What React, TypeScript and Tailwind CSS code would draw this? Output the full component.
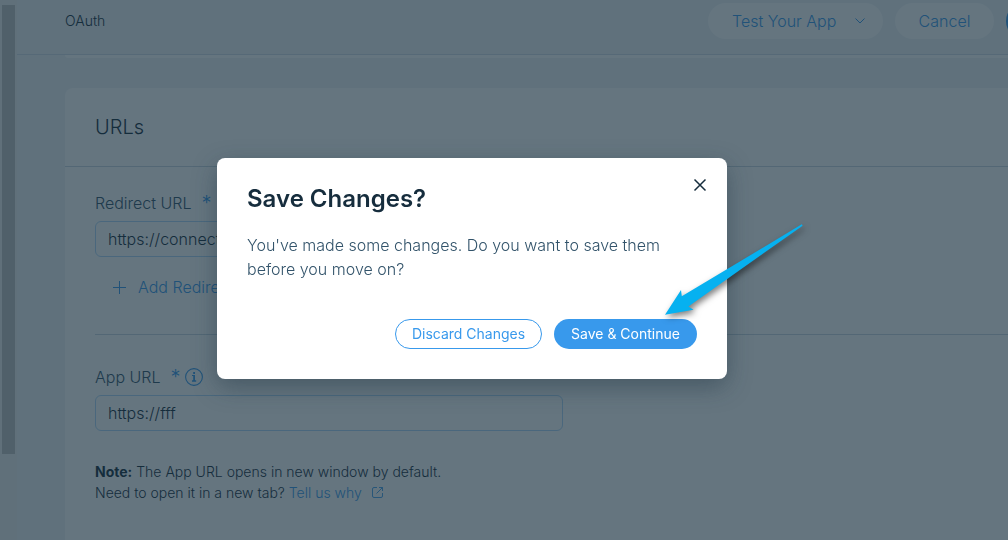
import React from "react";

const field =
  "block h-9 w-full max-w-[468px] rounded-md border border-[#b1d7f8] bg-white px-3 text-base font-light text-[#162d3d] outline-none";

function Required() {
  return (
    <span aria-hidden="true" className="ml-2.5 text-xl leading-6 font-light text-[#3899ec]">
      *
    </span>
  );
}

function Header() {
  return (
    <header className="flex h-[55px] items-start justify-between border-b border-[#d3dde6] bg-[#eff3f7] pl-12">
      <span className="pt-[11px] text-sm leading-5 font-light text-[#162d3d]">OAuth</span>
      <div className="flex w-[300px] shrink-0 gap-3 overflow-hidden pt-[3px]">
        <button
          type="button"
          className="flex h-9 w-[175px] shrink-0 items-center justify-between rounded-full bg-white pr-[18px] pl-6 text-base font-light text-[#3899ec]"
        >
          Test Your App
          <svg width="10" height="6" viewBox="0 0 10 6" fill="none" stroke="currentColor" aria-hidden="true">
            <path d="M0.5 0.5 5 5 9.5 0.5" />
          </svg>
        </button>
        <button
          type="button"
          className="h-9 w-[99px] shrink-0 rounded-full bg-white text-base font-light text-[#3899ec]"
        >
          Cancel
        </button>
        <button
          type="button"
          aria-label="Save"
          className="h-9 w-[99px] shrink-0 rounded-full bg-[#3899ec]"
        />
      </div>
    </header>
  );
}

function UrlsCard() {
  return (
    <section className="mt-[30px] min-h-[460px] rounded-tl-lg bg-white">
      <h2 className="border-b border-[#c9d6e0] px-[30px] pt-[27px] pb-[27px] text-xl leading-6 font-light text-[#162d3d]">
        URLs
      </h2>
      <div className="pt-6 pl-[30px]">
        <div className="flex h-[30px] items-start">
          <label htmlFor="redirect-url" className="text-base leading-6 font-light text-[#32536a]">
            Redirect URL
          </label>
          <Required />
        </div>
        <input id="redirect-url" type="url" defaultValue="https://connect" className={field} />
        <button
          type="button"
          className="mt-[18px] ml-[18px] flex items-center gap-3 text-base leading-6 font-light text-[#3899ec]"
        >
          <svg width="13" height="13" viewBox="0 0 13 13" stroke="currentColor" aria-hidden="true">
            <path d="M6.5 0V13M0 6.5H13" />
          </svg>
          Add Redirect URL
        </button>
        <hr className="mt-[35px] border-[#c9d6e0]" />
        <div className="mt-[30px] flex h-[30px] items-start">
          <label htmlFor="app-url" className="text-base leading-6 font-light text-[#32536a]">
            App URL
          </label>
          <Required />
          <button type="button" aria-label="More information" className="mt-[3px] ml-1 text-[#3899ec]">
            <svg width="18" height="18" viewBox="0 0 18 18" fill="none" stroke="currentColor" aria-hidden="true">
              <circle cx="9" cy="9" r="8.4" strokeWidth="1.1" />
              <path d="M7 7.5H9V13" strokeWidth="1" />
              <path d="M9.2 7V13M7 13H11.2" strokeWidth="1.5" />
              <path d="M8.2 5H10" strokeWidth="1.9" />
            </svg>
          </button>
        </div>
        <input id="app-url" type="url" defaultValue="https://fff" className={field} />
        <p className="mt-[30px] text-sm leading-[21px] font-light text-[#162d3d]">
          <strong className="font-bold">Note:</strong> The App URL opens in new window by default.
          <br />
          Need to open it in a new tab?{" "}
          <a href="#why" className="inline-flex items-center gap-2.5 text-[#3899ec]">
            Tell us why
            <svg width="11" height="11" viewBox="0 0 11 11" fill="none" stroke="currentColor" strokeWidth="0.9" aria-hidden="true">
              <path d="M5 0.5H2Q0.5 0.5 0.5 2V9Q0.5 10.5 2 10.5H9Q10.5 10.5 10.5 9V6M7 0.5H10.5V4M10.5 0.5 4.5 6.5" />
            </svg>
          </a>
        </p>
      </div>
    </section>
  );
}

function SaveDialog() {
  return (
    <div
      role="dialog"
      aria-modal="true"
      aria-labelledby="dialog-title"
      className="relative w-full max-w-[510px] rounded-lg bg-white px-[30px] pt-6 pb-[30px] shadow-[0_8px_24px_rgba(22,45,61,0.4)]"
    >
      <h1 id="dialog-title" className="text-2xl leading-[34px] font-semibold text-[#162d3d]">
        Save Changes?
      </h1>
      <button type="button" aria-label="Close" className="absolute top-4 right-4 p-1 text-[#162d3d]">
        <svg width="14" height="14" viewBox="0 0 14 14" stroke="currentColor" strokeWidth="1.5" aria-hidden="true">
          <path d="M1.5 1.5 12.5 12.5M12.5 1.5 1.5 12.5" />
        </svg>
      </button>
      <p className="mt-[17px] max-w-[440px] text-base leading-6 font-light text-[#32536a]">
        You've made some changes. Do you want to save them before you move on?
      </p>
      <div className="mt-[38px] flex justify-end gap-3">
        <button
          type="button"
          className="h-[30px] w-[147px] rounded-full border border-[#3899ec] bg-white text-sm text-[#3899ec]"
        >
          Discard Changes
        </button>
        <button type="button" className="h-[30px] w-[143px] rounded-full bg-[#3899ec] text-sm text-white">
          Save &amp; Continue
        </button>
      </div>
      <svg
        className="pointer-events-none absolute top-[56px] -right-[76px] drop-shadow-[2px_3px_3px_rgba(0,0,0,0.5)]"
        width="148"
        height="110"
        viewBox="655 214 148 110"
        fill="#06b1f0"
        aria-hidden="true"
      >
        <path d="M665 314.7 681 290 681.8 296.3 801.8 224.3 802.6 225.7 688.4 306.4 693.5 309.7Z" />
      </svg>
    </div>
  );
}

export default function App() {
  return (
    <div className="h-screen overflow-hidden font-['Inter','Liberation_Sans',sans-serif]">
      <div className="flex h-full bg-[#eff3f7]">
        <div className="w-[17px] shrink-0 bg-[#f1f1f1] px-0.5 pt-[5px]">
          <div className="h-[449px] w-[13px] bg-[#c1c1c1]" />
        </div>
        <div className="min-w-0 flex-1">
          <Header />
          <main className="pl-12">
            <div className="h-[3px] rounded-bl-lg bg-white" />
            <UrlsCard />
          </main>
        </div>
      </div>
      <div className="fixed inset-0 flex items-center justify-center bg-[rgba(22,45,61,0.66)] pr-16 pb-[3px]">
        <SaveDialog />
      </div>
    </div>
  );
}
